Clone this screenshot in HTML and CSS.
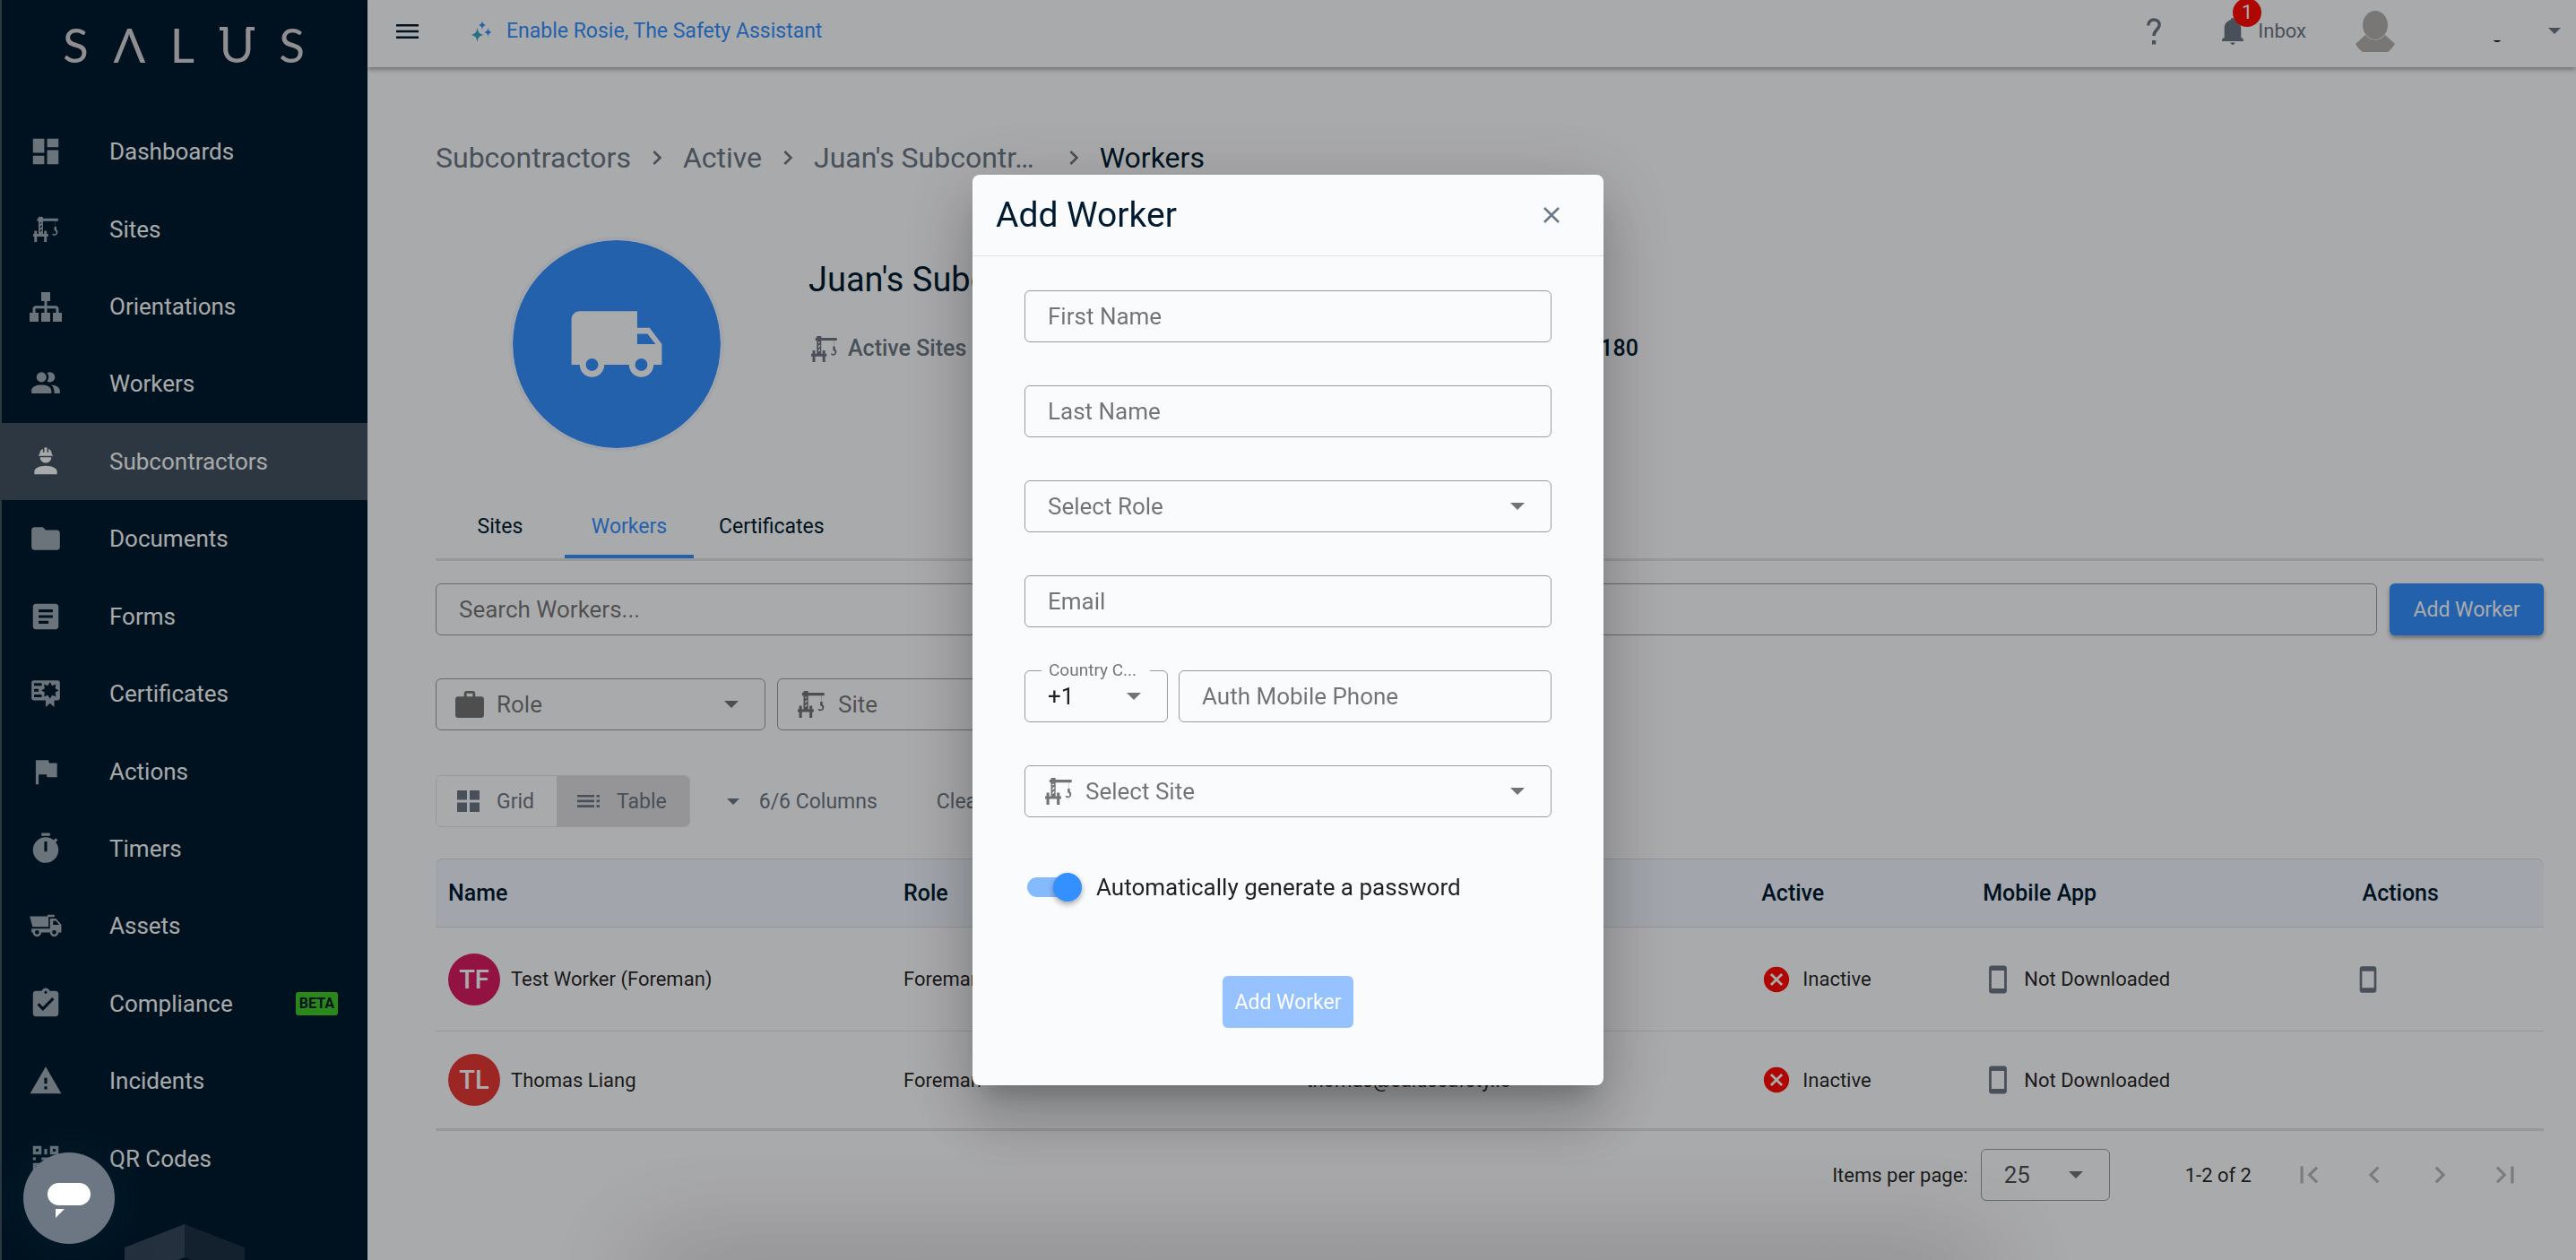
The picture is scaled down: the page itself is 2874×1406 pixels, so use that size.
FILE: index.html
```html
<!DOCTYPE html>
<html lang="en">
<head>
    <meta charset="UTF-8">
    <meta name="viewport" content="width=device-width, initial-scale=1.0">
    <title>Subcontractor Workers</title>
    <link rel="stylesheet" href="styles.css">
</head>
<body>
    <!-- Shared icons -->
    <svg class="sprite" aria-hidden="true">
        <symbol id="icon-crane" viewBox="0 0 29 29">
            <path d="M6.3 0h5v2h17.4v3H25.4v6.5h1.4v3.2c1 .6 1.5 1.500 1.500 2.700 0 2.600-1.700 4.200-3.800 4.200-1.500 0-2.500-.8-2.500-2.200h1.800c.1.500.4.700.9.700 1 0 1.700-.9 1.700-2.300 0-1-.6-1.500-2.100-1.900v-4.400h.8V5H11.300v14.700h1.400V16h3v3.700h1.600v3h-1.600V29h-3v-6.300H4.500V29h-3v-6.300H0v-3h1.500V16h3v3.700h1.800V5H4.700V2h1.600zM8 6.500v2l2-1.600V6.500zm2 3L8 11v2.200l2-1.600zm0 4.500l-2 1.600v2l2-1.600z"/>
        </symbol>
        <symbol id="icon-caret" viewBox="0 0 16 8"><path d="M0 0h16L8 8z"/></symbol>
        <symbol id="icon-chevron" viewBox="0 0 24 24"><path d="M10 6L8.590 7.410 13.170 12l-4.580 4.590L10 18l6-6z"/></symbol>
        <symbol id="icon-phone" viewBox="0 0 24 24"><path d="M17 1H7c-1.100 0-2 .9-2 2v18c0 1.100.9 2 2 2h10c1.100 0 2-.9 2-2V3c0-1.100-.9-2-2-2zm0 18H7V5h10z"/></symbol>
        <symbol id="icon-inactive" viewBox="0 0 24 24"><path d="M12 2C6.470 2 2 6.470 2 12s4.470 10 10 10 10-4.470 10-10S17.530 2 12 2zm5 13.590L15.590 17 12 13.410 8.410 17 7 15.590 10.590 12 7 8.410 8.410 7 12 10.590 15.590 7 17 8.410 13.410 12z"/></symbol>
    </svg>

    <div class="app">
        <aside class="sidebar">
            <div class="logo" role="img" aria-label="Salus">
                <span>S</span><span>Λ</span><span>L</span><span class="logo-u">U</span><span>S</span>
            </div>

            <nav class="nav">
                <a href="#" class="nav-item">
                    <svg viewBox="0 0 24 24"><path d="M3 13h8V3H3v10zm0 8h8v-6H3v6zm10 0h8V11h-8v10zm0-18v6h8V3h-8z"/></svg>
                    <span>Dashboards</span>
                </a>
                <a href="#" class="nav-item">
                    <svg viewBox="-5 -5 39 39"><use href="#icon-crane" width="29" height="29"/></svg>
                    <span>Sites</span>
                </a>
                <a href="#" class="nav-item">
                    <svg viewBox="-1 -3 38 38"><path d="M13 0h10v10h-3.500v5.300H29c2 0 3.500 1.500 3.500 3.500V23H36v10H26V23h3.500v-4.200c0-.4-.2-.6-.6-.6h-9.400V23H23v10H13V23h3.500v-4.800H7.100c-.4 0-.6.2-.6.6V23H10v10H0V23h3.500v-4.200c0-2 1.500-3.500 3.500-3.500h9.500V10H13z"/></svg>
                    <span>Orientations</span>
                </a>
                <a href="#" class="nav-item">
                    <svg viewBox="0 0 24 24"><path d="M16 17v2H2v-2s0-4 7-4 7 4 7 4m-3.500-9.500A3.500 3.500 0 1 0 9 11a3.500 3.500 0 0 0 3.500-3.500m3.440 5.500A5.320 5.320 0 0 1 18 17v2h4v-2s0-3.630-6.060-4M15 4a3.390 3.390 0 0 0-1.930.59 5 5 0 0 1 0 5.820A3.390 3.390 0 0 0 15 11a3.500 3.500 0 0 0 0-7z"/></svg>
                    <span>Workers</span>
                </a>
                <a href="#" class="nav-item active">
                    <svg viewBox="0 0 24 24"><path d="M12 15c-4.420 0-8 1.790-8 4v2h16v-2c0-2.210-3.580-4-8-4M8 9a4 4 0 0 0 4 4 4 4 0 0 0 4-4m-4.500-7c-.3 0-.5.210-.5.500v3h-1V3s-2.250.860-2.250 3.750c0 0-.75.140-.75 1.250h10c-.05-1.110-.75-1.250-.75-1.250C16.250 3.860 14 3 14 3v2.500h-1v-3c0-.29-.19-.5-.5-.5z"/></svg>
                    <span>Subcontractors</span>
                </a>
                <a href="#" class="nav-item">
                    <svg viewBox="0 0 24 24"><path d="M10 4H4c-1.100 0-2 .9-2 2v12c0 1.100.9 2 2 2h16c1.100 0 2-.9 2-2V8c0-1.100-.9-2-2-2h-8z"/></svg>
                    <span>Documents</span>
                </a>
                <a href="#" class="nav-item">
                    <svg viewBox="0 0 24 24"><path d="M19 3H5c-1.100 0-2 .9-2 2v14c0 1.100.9 2 2 2h14c1.100 0 2-.9 2-2V5c0-1.100-.9-2-2-2zm-5 14H7v-2h7zm3-4H7v-2h10zm0-4H7V7h10z"/></svg>
                    <span>Forms</span>
                </a>
                <a href="#" class="nav-item">
                    <svg viewBox="0 0 24 24"><path fill-rule="evenodd" d="M3.500 2.700h17c.8 0 1.500.7 1.500 1.500v11c0 .8-.7 1.500-1.500 1.500H18v4.800l-3-2.700-3 2.700v-4.800H3.500c-.8 0-1.500-.7-1.500-1.500v-11c0-.8.7-1.500 1.500-1.500zM3.800 4.600v1.900h5.400V4.600zm0 4.100v1.900H7V8.700zm0 4v1.900h5.400v-1.900zM15 3.800l-1.500 2.600-2.700-1 .5 2.900-2.400 1.400 2.400 1.500-.5 2.800 2.700-.9 1.500 2.500 1.500-2.500 2.700.9-.5-2.800 2.400-1.500-2.400-1.400.5-2.900-2.700 1z"/></svg>
                    <span>Certificates</span>
                </a>
                <a href="#" class="nav-item">
                    <svg viewBox="0 0 24 24"><path d="M14.400 6L14 4H5v17h2v-7h5.600l.4 2h7V6z"/></svg>
                    <span>Actions</span>
                </a>
                <a href="#" class="nav-item">
                    <svg viewBox="0 0 24 24"><path d="M19.030 7.390l1.420-1.420C20 5.460 19.550 5 19.040 4.560L17.620 6C16.070 4.740 14.120 4 12 4a9 9 0 0 0-9 9 9 9 0 0 0 9 9c5 0 9-4.030 9-9 0-2.120-.74-4.070-1.970-5.610M13 14h-2V7h2m2-6H9v2h6"/></svg>
                    <span>Timers</span>
                </a>
                <a href="#" class="nav-item">
                    <svg viewBox="0 0 24 24"><path fill-rule="evenodd" d="M.8 5.400h12.500V4.200h4.900v1.600H14v7H2.700zM15 7h4.200l3.800 4.200v5.500h-2a3 3 0 0 1-6 0H8.900a3 3 0 0 1-6 0H2V14h13zm2.200 1.600v2.800h4.300l-2.300-2.800zM5.900 15.100a1.500 1.500 0 1 0 0 3 1.500 1.500 0 0 0 0-3zm12.100 0a1.500 1.500 0 1 0 0 3 1.500 1.500 0 0 0 0-3z"/></svg>
                    <span>Assets</span>
                </a>
                <a href="#" class="nav-item">
                    <svg viewBox="0 0 24 24"><path d="M19 3h-4.180C14.400 1.840 13.300 1 12 1c-1.300 0-2.400.84-2.820 2H5c-1.100 0-2 .9-2 2v14c0 1.100.9 2 2 2h14c1.100 0 2-.9 2-2V5c0-1.100-.9-2-2-2zm-7 0c.55 0 1 .45 1 1s-.45 1-1 1-1-.45-1-1 .45-1 1-1zm-2 14l-4-4 1.410-1.410L10 14.170l6.590-6.590L18 9z"/></svg>
                    <span>Compliance</span>
                    <span class="beta">BETA</span>
                </a>
                <a href="#" class="nav-item">
                    <svg viewBox="0 0 24 24"><path d="M1 21h22L12 2 1 21zm12-3h-2v-2h2v2zm0-4h-2v-4h2v4z"/></svg>
                    <span>Incidents</span>
                </a>
                <a href="#" class="nav-item">
                    <svg viewBox="0 0 24 24"><path fill-rule="evenodd" d="M3 3h6v6H3zm2 2v2h2V5zm10-2h6v6h-6zm2 2v2h2V5zM3 15h6v6H3zm2 2v2h2v-2zM11 5h2v4h-2zM3 11h2v2H3zm6 0h6v2h-2v2h-2v-2H9zm8 0h4v2h-4zm-6 6h2v4h-2zm4-2h2v2h2v2h2v2h-4v-2h-2z"/></svg>
                    <span>QR Codes</span>
                </a>
            </nav>

            <div class="shield">
                <svg viewBox="0 0 134 40">
                    <path class="shield-left" d="M0 26L67 0v37l-8 3H0z"/>
                    <path class="shield-right" d="M134 26L67 0v37l8 3h59z"/>
                </svg>
            </div>
        </aside>

        <div class="page">
            <header class="topbar">
                <button type="button" class="icon-button menu-button" aria-label="Toggle menu">
                    <svg viewBox="0 0 25 16"><path d="M0 0h25v2.500H0zm0 6.700h25v2.600H0zm0 6.800h25V16H0z"/></svg>
                </button>
                <a href="#" class="rosie-link">
                    <svg viewBox="0 0 24 24">
                        <path class="spark-teal" d="M7.500 7.500c.7 5 1.800 7.300 7 8.500-5.200 1.200-6.300 3.500-7 8-.7-4.500-1.800-6.800-7-8 5.200-1.200 6.300-3.500 7-8.500z"/>
                        <path d="M13 0c.4 3 1.200 4.300 4 5-2.800.7-3.600 2-4 5-.4-3-1.200-4.300-4-5 2.800-.7 3.600-2 4-5zM19.500 8c.5 3 1.300 4.300 4.500 5-3.200.7-4 2-4.500 5-.5-3-1.300-4.300-4.500-5 3.200-.7 4-2 4.500-5z"/>
                    </svg>
                    <span>Enable Rosie, The Safety Assistant</span>
                </a>
                <div class="topbar-right">
                    <button type="button" class="icon-button help-button" aria-label="Help">
                        <svg viewBox="0 0 16 30"><path d="M1.800 8.500C1.800 4.500 4.500 2 8 2s6.200 2.300 6.200 5.800c0 5-6.200 5.700-6.200 12.200" fill="none" stroke="currentColor" stroke-width="3.400"/><path d="M6 25h4.200v4.500H6z"/></svg>
                    </button>
                    <button type="button" class="inbox">
                        <svg viewBox="0 0 24 30"><path d="M12 0c1.300 0 2.200.9 2.200 2.200 4.300 1 7.100 4.700 7.100 9.300v10L24 24v2H0v-2l2.700-2.500v-10c0-4.600 2.800-8.300 7.100-9.300C9.800.9 10.700 0 12 0zM9.500 27.500h5c-.2 1.500-1.200 2.500-2.500 2.500s-2.300-1-2.500-2.500z"/></svg>
                        <span>Inbox</span>
                        <span class="badge">1</span>
                    </button>
                    <button type="button" class="account" aria-label="Account">
                        <svg class="account-avatar" viewBox="0 0 48 52">
                            <ellipse cx="24" cy="19" rx="14" ry="16"/>
                            <path d="M13 30c6 7.500 16 7.500 22 0l11 10c-3 5-6 7.500-8 9H10c-3-2-6-5-8-9z"/>
                        </svg>
                        <svg class="account-mark" viewBox="0 0 8 3"><path d="M0 0h8c-1 2.500-7 2.500-8 0z"/></svg>
                        <svg class="caret-small"><use href="#icon-caret"/></svg>
                    </button>
                </div>
            </header>

            <main class="content">
                <nav class="breadcrumb" aria-label="Breadcrumb">
                    <a href="#">Subcontractors</a>
                    <svg><use href="#icon-chevron"/></svg>
                    <a href="#">Active</a>
                    <svg><use href="#icon-chevron"/></svg>
                    <a href="#" class="crumb-long">Juan's Subcontr…</a>
                    <svg><use href="#icon-chevron"/></svg>
                    <span class="current">Workers</span>
                </nav>

                <section class="profile">
                    <div class="profile-picture">
                        <svg viewBox="0 0 24 24"><path d="M20 8h-3V4H3c-1.100 0-2 .9-2 2v11h2c0 1.660 1.340 3 3 3s3-1.340 3-3h6c0 1.660 1.340 3 3 3s3-1.340 3-3h2v-5l-3-4zM6 18.500c-.83 0-1.500-.67-1.500-1.500s.67-1.500 1.500-1.500 1.500.67 1.500 1.500-.67 1.500-1.500 1.500zm13.500-9l1.960 2.500H17V9.500h2.500zm-1.500 9c-.83 0-1.500-.67-1.500-1.500s.67-1.500 1.500-1.500 1.500.67 1.500 1.500-.67 1.500-1.500 1.500z"/></svg>
                    </div>
                    <div class="profile-info">
                        <h1>Juan's Subcontractor</h1>
                        <div class="profile-stats">
                            <span class="stat"><svg><use href="#icon-crane"/></svg>Active Sites</span>
                            <span class="stat-value">180</span>
                        </div>
                    </div>
                </section>

                <div class="tabs" role="tablist">
                    <button type="button" class="tab" role="tab">Sites</button>
                    <button type="button" class="tab selected" role="tab" aria-selected="true">Workers</button>
                    <button type="button" class="tab" role="tab">Certificates</button>
                </div>

                <div class="search-row">
                    <input type="search" class="field" placeholder="Search Workers..." aria-label="Search Workers">
                    <button type="button" class="primary-button">Add Worker</button>
                </div>

                <div class="filters">
                    <div class="select-wrap with-icon">
                        <svg class="lead-icon" viewBox="0 0 33 31"><path d="M13 0h7c1.700 0 3 1.300 3 3v3.500h7c1.700 0 3 1.300 3 3V28c0 1.700-1.300 3-3 3H3c-1.700 0-3-1.300-3-3V9.500c0-1.700 1.300-3 3-3h7V3c0-1.700 1.300-3 3-3zm0 2.800v3.700h7V2.800z"/></svg>
                        <select class="field" aria-label="Role"><option>Role</option></select>
                        <svg class="caret"><use href="#icon-caret"/></svg>
                    </div>
                    <div class="select-wrap with-icon">
                        <svg class="lead-icon"><use href="#icon-crane"/></svg>
                        <select class="field" aria-label="Site"><option>Site</option></select>
                        <svg class="caret"><use href="#icon-caret"/></svg>
                    </div>
                </div>

                <div class="toolbar">
                    <div class="view-toggle">
                        <button type="button">
                            <svg viewBox="0 0 25 24"><path d="M0 0h11v10.500H0zm14 0h11v10.500H14zM0 13.500h11V24H0zm14 0h11V24H14z"/></svg>
                            Grid
                        </button>
                        <button type="button" class="on">
                            <svg viewBox="0 0 25 24"><path d="M0 5h19v2.600H0zm0 5.600h19v2.600H0zm0 5.700h19v2.700H0zM21.500 5H25v2.600h-3.500zm0 5.600H25v2.600h-3.500zm0 5.700H25v2.700h-3.500z"/></svg>
                            Table
                        </button>
                    </div>
                    <button type="button" class="text-button columns-button">
                        <svg class="caret-small"><use href="#icon-caret"/></svg>
                        6/6 Columns
                    </button>
                    <button type="button" class="text-button">Clear</button>
                </div>

                <table class="workers">
                    <thead>
                        <tr>
                            <th class="col-name">Name</th>
                            <th class="col-role">Role</th>
                            <th class="col-email"></th>
                            <th class="col-active">Active</th>
                            <th class="col-app">Mobile App</th>
                            <th class="col-actions">Actions</th>
                        </tr>
                    </thead>
                    <tbody>
                        <tr>
                            <td><div class="cell"><span class="avatar pink">TF</span>Test Worker (Foreman)</div></td>
                            <td>Foreman</td>
                            <td></td>
                            <td><div class="cell"><svg class="inactive-icon"><use href="#icon-inactive"/></svg>Inactive</div></td>
                            <td><div class="cell"><svg class="phone-icon"><use href="#icon-phone"/></svg>Not Downloaded</div></td>
                            <td><button type="button" class="icon-button row-action" aria-label="Send app link"><svg><use href="#icon-phone"/></svg></button></td>
                        </tr>
                        <tr>
                            <td><div class="cell"><span class="avatar red">TL</span>Thomas Liang</div></td>
                            <td>Foreman</td>
                            <td>thomas@salussafety.io</td>
                            <td><div class="cell"><svg class="inactive-icon"><use href="#icon-inactive"/></svg>Inactive</div></td>
                            <td><div class="cell"><svg class="phone-icon"><use href="#icon-phone"/></svg>Not Downloaded</div></td>
                            <td></td>
                        </tr>
                    </tbody>
                </table>

                <div class="paginator">
                    <label for="page-size">Items per page:</label>
                    <div class="select-wrap page-size">
                        <select id="page-size" class="field"><option>25</option></select>
                        <svg class="caret"><use href="#icon-caret"/></svg>
                    </div>
                    <span class="range">1-2 of 2</span>
                    <button type="button" class="icon-button" aria-label="First page" disabled><svg viewBox="0 0 24 24"><path d="M18.410 16.590L13.820 12l4.590-4.590L17 6l-6 6 6 6zM6 6h2v12H6z"/></svg></button>
                    <button type="button" class="icon-button" aria-label="Previous page" disabled><svg viewBox="0 0 24 24"><path d="M15.410 7.410L14 6l-6 6 6 6 1.410-1.410L10.830 12z"/></svg></button>
                    <button type="button" class="icon-button" aria-label="Next page" disabled><svg><use href="#icon-chevron"/></svg></button>
                    <button type="button" class="icon-button" aria-label="Last page" disabled><svg viewBox="0 0 24 24"><path d="M5.590 7.410L10.180 12l-4.590 4.590L7 18l6-6-6-6zM16 6h2v12h-2z"/></svg></button>
                </div>
            </main>
        </div>
    </div>

    <div class="bottom-shadow"></div>

    <div class="backdrop">
        <div class="modal" role="dialog" aria-modal="true" aria-labelledby="modal-title">
            <div class="modal-header">
                <h2 id="modal-title">Add Worker</h2>
                <button type="button" class="icon-button close-button" aria-label="Close">
                    <svg viewBox="0 0 18 18"><path d="M1 1l16 16M17 1L1 17"/></svg>
                </button>
            </div>
            <form class="modal-body">
                <input type="text" class="field" placeholder="First Name" aria-label="First Name">
                <input type="text" class="field" placeholder="Last Name" aria-label="Last Name">
                <div class="select-wrap">
                    <select class="field" aria-label="Select Role"><option>Select Role</option></select>
                    <svg class="caret"><use href="#icon-caret"/></svg>
                </div>
                <input type="email" class="field" placeholder="Email" aria-label="Email">
                <div class="phone-row">
                    <div class="select-wrap country">
                        <label for="country-code">Country C...</label>
                        <select id="country-code" class="field"><option>+1</option></select>
                        <svg class="caret"><use href="#icon-caret"/></svg>
                    </div>
                    <input type="tel" class="field" placeholder="Auth Mobile Phone" aria-label="Auth Mobile Phone">
                </div>
                <div class="select-wrap with-icon">
                    <svg class="lead-icon"><use href="#icon-crane"/></svg>
                    <select class="field" aria-label="Select Site"><option>Select Site</option></select>
                    <svg class="caret"><use href="#icon-caret"/></svg>
                </div>
                <div class="switch-row">
                    <input type="checkbox" class="switch" id="auto-password" checked>
                    <label for="auto-password">Automatically generate a password</label>
                </div>
                <button type="submit" class="submit-button" disabled>Add Worker</button>
            </form>
        </div>
    </div>

    <button type="button" class="chat-button" aria-label="Open chat">
        <svg viewBox="0 0 48 40"><rect width="48" height="25" rx="12.500"/><path d="M9 29h10l-10 10z"/></svg>
    </button>
</body>
</html>
```

FILE: styles.css
```css
* {
    box-sizing: border-box;
    margin: 0;
    padding: 0;
}

:root {
    --navy: #001b30;
    --blue: #3490ff;
    --slate: #6b7785;
    --grey: rgba(0, 0, 0, 0.54);
    --paper: #fafbfd;
    --line: rgba(0, 0, 0, 0.1);
    --outline: rgba(0, 0, 0, 0.38);
}

body {
    height: 100vh;
    overflow: hidden;
    background: var(--paper);
    color: rgba(0, 0, 0, 0.87);
    font-family: Roboto, "Liberation Sans", sans-serif;
    font-size: 22px;
}

a {
    color: inherit;
    text-decoration: none;
}

svg {
    display: block;
    flex-shrink: 0;
    fill: currentColor;
}

button,
input,
select {
    font-family: inherit;
    font-size: inherit;
    color: inherit;
}

button {
    border: none;
    background: none;
    cursor: pointer;
}

.sprite {
    position: absolute;
    width: 0;
    height: 0;
}

.app {
    display: flex;
    height: 100vh;
}

/* Sidebar */
.sidebar {
    display: flex;
    flex-direction: column;
    width: 410px;
    flex-shrink: 0;
    background: var(--navy);
    border-left: 2px solid #42525c;
    color: #f8f9fa;
}

.logo {
    display: flex;
    justify-content: space-between;
    height: 126px;
    padding: 18px 70px 0 68px;
    font-family: Lato, "Open Sans", sans-serif;
    font-size: 53px;
    line-height: 64px;
    color: #d4d2d5;
}

.logo-u {
    position: relative;
}

.logo-u::before,
.logo-u::after {
    content: "";
    position: absolute;
    top: 12px;
    width: 9px;
    height: 4px;
    background: currentColor;
}

.logo-u::before {
    left: 0;
}

.logo-u::after {
    right: 0;
}

.nav {
    flex: 1;
    display: flex;
    flex-direction: column;
}

.nav-item {
    flex: 1;
    display: flex;
    align-items: center;
    padding: 0 33px 0 30px;
    font-size: 26px;
}

.nav-item svg {
    width: 38px;
    height: 38px;
    margin-right: 52px;
    color: #9facb5;
}

.nav-item.active {
    background: #425262;
}

.nav-item.active svg {
    color: #f8f9fa;
}

.beta {
    margin-left: auto;
    padding: 0 4px;
    border-radius: 3px;
    background: #3fc825;
    color: var(--navy);
    font-size: 16px;
    font-weight: 700;
    line-height: 26px;
}

.shield {
    display: flex;
    justify-content: center;
    align-items: flex-end;
    height: 70px;
}

.shield svg {
    width: 134px;
    height: 40px;
}

.shield-left {
    fill: #36485a;
}

.shield-right {
    fill: #1d3244;
}

/* Top bar */
.page {
    flex: 1;
    min-width: 0;
}

.topbar {
    display: flex;
    align-items: center;
    height: 75px;
    padding: 0 17px 6px 32px;
    box-shadow: 0 2px 6px rgba(0, 0, 0, 0.4);
}

.menu-button svg {
    width: 25px;
    height: 16px;
    color: var(--navy);
}

.rosie-link {
    display: flex;
    align-items: center;
    gap: 16px;
    margin-left: 58px;
    color: var(--blue);
    font-size: 23px;
}

.rosie-link svg {
    width: 24px;
    height: 24px;
}

.spark-teal {
    fill: #38a9c4;
}

.topbar-right {
    display: flex;
    align-items: center;
    margin-left: auto;
    color: var(--slate);
}

.help-button svg {
    width: 16px;
    height: 30px;
}

.inbox {
    position: relative;
    display: flex;
    align-items: center;
    gap: 16px;
    margin-left: 68px;
}

.inbox svg {
    width: 24px;
    height: 30px;
}

.badge {
    position: absolute;
    left: 12px;
    bottom: 20px;
    width: 32px;
    height: 32px;
    border-radius: 50%;
    background: #ff0a05;
    color: var(--paper);
    line-height: 32px;
}

.account {
    display: flex;
    align-items: center;
    margin-left: 53px;
}

.account-avatar {
    width: 48px;
    height: 52px;
    color: #b1b0af;
}

.account-mark {
    width: 8px;
    height: 3px;
    margin: 24px 53px 0 108px;
    color: var(--navy);
}

.caret-small {
    width: 14px;
    height: 7px;
}

/* Content */
.content {
    padding: 82px 36px 0 76px;
}

.breadcrumb {
    display: flex;
    align-items: center;
    gap: 13px;
    font-size: 32px;
    line-height: 38px;
    color: var(--slate);
}

.breadcrumb svg {
    width: 32px;
    height: 32px;
}

.crumb-long {
    margin-right: 15px;
    white-space: nowrap;
}

.breadcrumb .current {
    color: var(--navy);
}

.profile {
    display: flex;
    gap: 94px;
    margin: 69px 0 0 82px;
}

.profile-picture {
    display: flex;
    align-items: center;
    justify-content: center;
    width: 240px;
    height: 240px;
    border: 4px solid #edf4fd;
    border-radius: 50%;
    background: var(--blue);
    background-clip: padding-box;
    color: var(--paper);
}

.profile-picture svg {
    width: 110px;
    height: 110px;
}

.profile-info {
    width: 926px;
    padding-top: 26px;
}

.profile-info h1 {
    font-size: 38px;
    font-weight: 400;
    line-height: 44px;
    color: var(--navy);
}

.profile-stats {
    display: flex;
    justify-content: space-between;
    margin-top: 40px;
    font-size: 25px;
    font-weight: 500;
    line-height: 30px;
}

.stat {
    display: flex;
    align-items: center;
    gap: 12px;
    padding-left: 3px;
    color: var(--slate);
}

.stat svg {
    width: 29px;
    height: 29px;
}

.stat-value {
    color: var(--navy);
}

.tabs {
    display: flex;
    margin-top: 47px;
    border-bottom: 3px solid var(--line);
}

.tab {
    min-width: 144px;
    height: 72px;
    padding: 4px 28px 0;
    border-bottom: 4px solid transparent;
    font-size: 23px;
    color: var(--navy);
}

.tab.selected {
    border-color: var(--blue);
    color: var(--blue);
}

/* Form fields */
.field {
    display: block;
    width: 100%;
    height: 58px;
    padding: 0 25px;
    border: 1px solid var(--outline);
    border-radius: 6px;
    background: none;
    font-size: 26px;
    color: var(--grey);
    appearance: none;
}

.field::placeholder {
    color: var(--grey);
    opacity: 1;
}

.select-wrap {
    position: relative;
    color: var(--grey);
}

.caret {
    position: absolute;
    top: 25px;
    right: 30px;
    width: 16px;
    height: 8px;
    pointer-events: none;
}

.lead-icon {
    position: absolute;
    top: 14px;
    left: 22px;
    width: 32px;
    height: 30px;
    pointer-events: none;
}

.with-icon .field {
    padding-left: 67px;
}

.search-row {
    display: flex;
    gap: 14px;
    margin-top: 25px;
}

.primary-button {
    width: 172px;
    flex-shrink: 0;
    border-radius: 6px;
    background: var(--blue);
    box-shadow: 0 3px 5px rgba(0, 0, 0, 0.35);
    color: var(--paper);
    font-size: 23px;
}

.filters {
    display: flex;
    gap: 13px;
    margin-top: 48px;
}

.filters .select-wrap {
    width: 368px;
}

.toolbar {
    display: flex;
    align-items: center;
    margin-top: 50px;
    font-size: 23px;
    color: var(--slate);
}

.view-toggle {
    display: flex;
    height: 58px;
    border: 1px solid var(--line);
    border-radius: 6px;
    overflow: hidden;
}

.view-toggle button {
    display: flex;
    align-items: center;
    gap: 19px;
    padding: 0 25px 0 23px;
}

.view-toggle .on {
    background: #dcdbdd;
}

.view-toggle svg {
    width: 25px;
    height: 24px;
}

.text-button {
    display: flex;
    align-items: center;
    margin-left: 66px;
}

.columns-button {
    gap: 22px;
    margin-left: 41px;
}

/* Workers table */
.workers {
    width: 100%;
    margin-top: 35px;
    table-layout: fixed;
    border-collapse: separate;
    border-spacing: 0;
    border-bottom: 2px solid var(--line);
}

.workers th {
    height: 77px;
    padding-left: 14px;
    border-top: 1px solid var(--line);
    border-bottom: 1px solid var(--line);
    background: #eff5fe;
    color: var(--navy);
    font-size: 25px;
    font-weight: 500;
    text-align: left;
}

.workers th:first-child {
    border-top-left-radius: 8px;
}

.workers th:last-child {
    border-top-right-radius: 8px;
}

.workers td {
    padding: 25px 0 25px 14px;
    border-bottom: 1px solid var(--line);
}

.col-name {
    width: 21.6%;
}

.col-role {
    width: 19.1%;
}

.col-email {
    width: 21.6%;
}

.col-active {
    width: 10.5%;
}

.col-app {
    width: 18%;
}

.cell {
    display: flex;
    align-items: center;
}

.avatar {
    width: 58px;
    height: 58px;
    margin-right: 12px;
    border-radius: 50%;
    color: var(--paper);
    font-size: 29px;
    font-weight: 500;
    line-height: 58px;
    text-align: center;
}

.avatar.pink {
    background: #d81b60;
}

.avatar.red {
    background: #e53935;
}

.inactive-icon {
    width: 34px;
    height: 34px;
    margin-right: 12px;
    color: #ff0a05;
}

.phone-icon {
    width: 34px;
    height: 34px;
    margin-right: 12px;
    color: var(--slate);
}

.row-action {
    display: block;
    height: 65px;
    margin-left: -10px;
    color: var(--slate);
}

.row-action svg {
    width: 32px;
    height: 32px;
}

.paginator {
    display: flex;
    align-items: center;
    justify-content: flex-end;
    margin-top: 20px;
    padding-right: 7px;
}

.page-size {
    width: 144px;
    margin-left: 14px;
}

.page-size .field {
    color: rgba(0, 0, 0, 0.7);
}

.range {
    margin: 0 27px 0 84px;
}

.paginator .icon-button {
    display: flex;
    justify-content: center;
    width: 73px;
    color: rgba(0, 0, 0, 0.27);
}

.paginator .icon-button svg {
    width: 38px;
    height: 38px;
}

.bottom-shadow {
    position: fixed;
    top: 100%;
    left: 25%;
    right: 23%;
    height: 40px;
    box-shadow: 0 0 120px 10px rgba(0, 0, 0, 0.28);
}

/* Add worker modal */
.backdrop {
    position: fixed;
    inset: 0;
    display: flex;
    align-items: center;
    justify-content: center;
    background: rgba(0, 0, 0, 0.32);
}

.modal {
    width: 704px;
    border-radius: 8px;
    background: var(--paper);
    box-shadow: 0 20px 27px -12px rgba(0, 0, 0, 0.2), 0 43px 68px 5px rgba(0, 0, 0, 0.14), 0 16px 82px 14px rgba(0, 0, 0, 0.12);
}

.modal-header {
    display: flex;
    align-items: center;
    justify-content: space-between;
    height: 91px;
    padding: 0 49px 0 26px;
    border-bottom: 1px solid #dfe0e2;
}

.modal-header h2 {
    font-size: 39px;
    font-weight: 400;
    color: var(--navy);
}

.close-button svg {
    width: 18px;
    height: 18px;
    fill: none;
    stroke: var(--slate);
    stroke-width: 2.5;
}

.modal-body {
    display: flex;
    flex-direction: column;
    gap: 48px;
    padding: 38px 58px 64px;
}

.phone-row {
    display: flex;
    gap: 12px;
}

.country {
    width: 160px;
    flex-shrink: 0;
}

.country label {
    position: absolute;
    top: -11px;
    left: 19px;
    width: 121px;
    padding: 0 8px;
    background: var(--paper);
    font-size: 19px;
    line-height: 22px;
    white-space: nowrap;
}

.country .field {
    color: rgba(0, 0, 0, 0.87);
}

.switch-row {
    display: flex;
    align-items: center;
    gap: 16px;
    margin-top: 14px;
    padding-left: 3px;
    font-size: 26px;
    line-height: 32px;
}

.switch {
    position: relative;
    width: 61px;
    height: 32px;
    appearance: none;
    cursor: pointer;
}

.switch::before {
    content: "";
    position: absolute;
    inset: 5px 2px 5px 0;
    border-radius: 11px;
    background: #86baff;
}

.switch::after {
    content: "";
    position: absolute;
    top: 0;
    right: 0;
    width: 32px;
    height: 32px;
    border-radius: 50%;
    background: var(--blue);
    box-shadow: 0 3px 6px rgba(0, 0, 0, 0.35);
}

.submit-button {
    width: 146px;
    height: 58px;
    margin-top: 35px;
    align-self: center;
    border-radius: 6px;
    background: #96c2ff;
    color: #fff;
    font-size: 23px;
}

/* Chat launcher */
.chat-button {
    position: fixed;
    left: 26px;
    bottom: 18px;
    display: flex;
    justify-content: center;
    align-items: center;
    width: 102px;
    height: 102px;
    padding-top: 6px;
    border-radius: 50%;
    background: #6c7783;
    box-shadow: 0 2px 60px rgba(0, 60, 80, 0.3);
    color: #fff;
}

.chat-button svg {
    width: 48px;
    height: 40px;
}
```
